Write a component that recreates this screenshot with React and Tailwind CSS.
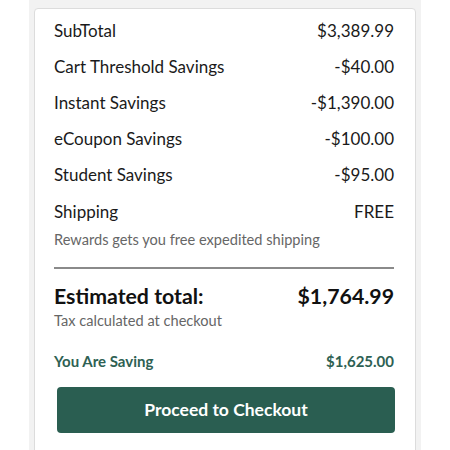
export default function App() {
  const rows = [
    ["SubTotal", "$3,389.99"],
    ["Cart Threshold Savings", "-$40.00"],
    ["Instant Savings", "-$1,390.00"],
    ["eCoupon Savings", "-$100.00"],
    ["Student Savings", "-$95.00"],
  ];
  return (
    <div className="w-[450px] h-[450px] overflow-hidden bg-white" style={{ fontFamily: "Lato, 'Open Sans', sans-serif" }}>
      <div className="mx-[29px] h-full bg-[#f2f2f2] px-[5px] pt-[8px]">
        <div className="h-[460px] rounded-[4px] border border-[#dcdcdc] bg-white pl-[19px] pr-[21px] pt-[4px]">
          {rows.map(([l, r]) => (
            <div key={l} className="flex justify-between text-[17px] leading-[36px] text-[#1a1a1a]">
              <span>{l}</span>
              <span>{r}</span>
            </div>
          ))}
          <div className="mt-[1px] flex justify-between text-[17px] leading-[36px] text-[#1a1a1a]">
            <span>Shipping</span>
            <span>FREE</span>
          </div>
          <div className="text-[14.6px] leading-[20px] text-[#666]">Rewards gets you free expedited shipping</div>
          <div className="mt-[17px] h-[2px] bg-[#8a8a8a]" />
          <div className="mt-[12px] flex justify-between text-[21.3px] font-bold leading-[30px] text-[#111]">
            <span>Estimated total:</span>
            <span>$1,764.99</span>
          </div>
          <div className="text-[14.6px] leading-[20px] text-[#666]">Tax calculated at checkout</div>
          <div className="mt-[20px] flex justify-between text-[15px] font-bold leading-[20px] text-[#2e6153]">
            <span>You Are Saving</span>
            <span>$1,625.00</span>
          </div>
          <button className="mt-[16px] ml-[3px] flex h-[46px] w-[338px] items-center justify-center rounded-[4px] bg-[#2a5e51] text-[17.5px] font-bold text-white">
            Proceed to Checkout
          </button>
        </div>
      </div>
    </div>
  );
}
